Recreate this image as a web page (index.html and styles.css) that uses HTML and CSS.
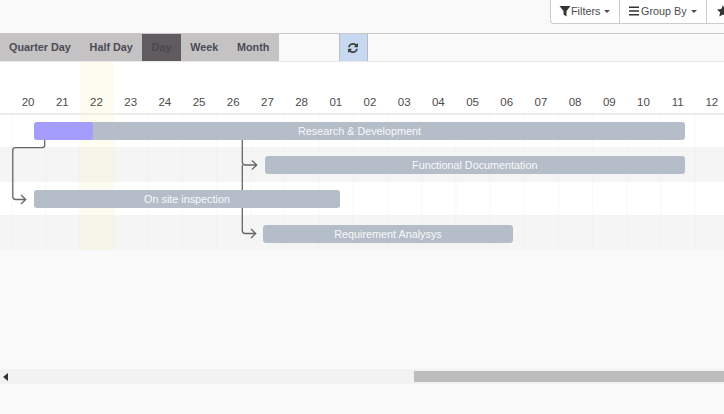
FILE: index.html
```html
<!DOCTYPE html>
<html lang="en">
<head>
<meta charset="utf-8">
<title>Gantt</title>
<link rel="stylesheet" href="styles.css">
</head>
<body>
<div class="panel">
  <div class="btn-group">
    <button class="ctl first"><svg class="ico" viewBox="0 0 12 12"><path d="M0.500 1H11.500L7.500 6V11.500L4.500 9.500V6Z"/></svg>Filters<span class="caret"></span></button>
    <button class="ctl second"><svg class="ico" viewBox="0 0 12 12"><path d="M0 1.500H10V3.100H0ZM0 5.200H10V6.800H0ZM0 8.900H10V10.500H0Z"/></svg>Group By<span class="caret"></span></button>
    <button class="ctl third" aria-label="Favorites"><svg class="ico" viewBox="0 0 12 12"><path d="M6 0.300L7.800 4.100L11.900 4.600L8.900 7.500L9.700 11.600L6 9.600L2.300 11.600L3.100 7.500L0.100 4.600L4.200 4.100Z"/></svg></button>
  </div>
</div>
<div class="toolbar">
  <button class="scale scale-first">Quarter Day</button>
  <button class="scale">Half Day</button>
  <button class="scale active">Day</button>
  <button class="scale">Week</button>
  <button class="scale">Month</button>
  <button class="refresh"><svg viewBox="0 0 1536 1536"><path d="M1511 928q0 5-1 7-64 268-268 434.500t-478 166.500q-146 0-282.500-55t-243.500-155l-129 129q-19 19-45 19t-45-19-19-45v-448q0-26 19-45t45-19h448q26 0 45 19t19 45-19 45l-137 137q71 66 161 102t187 36q134 0 250-65t186-179q11-17 53-117 8-23 30-23h192q13 0 22.500 9.500t9.500 22.500zm25-800v448q0 26-19 45t-45 19h-448q-26 0-45-19t-19-45 19-45l138-138q-148-137-349-137-134 0-250 65t-186 179q-11 17-53 117-8 23-30 23h-199q-13 0-22.500-9.500t-9.500-22.500v-7q65-268 270-434.500t480-166.500q146 0 284 55.500t245 154.500l130-129q19-19 45-19t45 19 19 45z"/></svg></button>
</div>
<div class="chart">
  <div class="today"></div>
  <div class="dates">
    <span>20</span><span>21</span><span>22</span><span>23</span><span>24</span><span>25</span><span>26</span><span>27</span><span>28</span><span>01</span><span>02</span><span>03</span><span>04</span><span>05</span><span>06</span><span>07</span><span>08</span><span>09</span><span>10</span><span>11</span><span>12</span>
  </div>
  <div class="row row-top">
    <div class="bar bar-research"><div class="progress"></div><span class="label">Research &amp; Development</span></div>
  </div>
  <div class="row alt">
    <div class="bar bar-doc"><span class="label">Functional Documentation</span></div>
  </div>
  <div class="row">
    <div class="bar bar-site"><span class="label">On site inspection</span></div>
  </div>
  <div class="row alt row-last">
    <div class="bar bar-req"><span class="label">Requirement Analysys</span></div>
  </div>
  <svg class="arrows" viewBox="0 0 724 250" width="724" height="250">
    <path d="M44.700 140V145Q44.700 147.700 42 147.700H15.500Q12.800 147.700 12.800 150.500V196.500Q12.800 199.500 15.800 199.500H25.500M21 195L25.700 199.500L21 204"/>
    <path d="M242.300 140V162Q242.300 165 245.300 165H256.500M252 160.500L256.700 165L252 169.500"/>
    <path d="M242.300 165V230.500Q242.300 233.500 245.300 233.500H255.500M251 229L255.700 233.500L251 238"/>
  </svg>
</div>
<div class="scroller">
  <span class="scroll-left"></span>
  <div class="thumb"></div>
</div>
</body>
</html>
```
FILE: styles.css
```css
* {
  box-sizing: border-box;
}

html,
body {
  margin: 0;
  height: 100%;
}

body {
  background: #f9f9f9;
  font-family: "Liberation Sans", Arial, sans-serif;
  font-size: 10.800px;
  color: #4c4c4c;
  overflow: hidden;
  width: 724px;
  height: 414px;
}

button {
  font: inherit;
  margin: 0;
  cursor: pointer;
}

.panel {
  height: 34px;
  border-bottom: 1px solid #c8c8c8;
  padding-left: 550px;
  overflow: hidden;
}

.btn-group {
  display: flex;
  width: 300px;
  height: 24px;
}

.ctl {
  display: flex;
  align-items: center;
  flex: none;
  height: 24px;
  padding: 0 0 1px 9px;
  background: #fff;
  border: 1px solid #ccc;
  border-top: 0;
  border-left: 0;
  color: #4c4c4c;
  white-space: nowrap;
}

.ctl.first {
  border-left: 1px solid #ccc;
  border-bottom-left-radius: 4px;
  padding-left: 8px;
  width: 70px;
}

.ctl.second {
  width: 87px;
}

.ctl.third {
  width: 40px;
  padding-left: 10px;
  border-right: 0;
}

.ico {
  width: 12px;
  height: 12px;
  fill: #333;
  flex: none;
}

.caret {
  width: 0;
  height: 0;
  margin-left: 4px;
  border-top: 3.500px solid #4c4c4c;
  border-left: 3.500px solid transparent;
  border-right: 3.500px solid transparent;
}

.toolbar {
  display: flex;
  height: 28px;
  border-bottom: 1px solid #e8e8e8;
}

.scale {
  height: 27px;
  padding: 0 9.400px 1px;
  border: 0;
  background: #c4c2c3;
  color: #4b4b55;
  font-weight: bold;
}

.scale-first {
  padding-left: 9px;
}

.scale.active {
  background: #5f5b5e;
  color: #4c484c;
}

.refresh {
  display: flex;
  align-items: center;
  justify-content: center;
  flex: none;
  width: 29px;
  height: 27px;
  margin-left: 60px;
  padding: 0;
  background: #c6d9f0;
  border: 1px solid #bcbcbc;
  border-width: 0 1px;
}

.refresh svg {
  width: 10px;
  height: 10px;
  fill: #3f3f3f;
}

.chart {
  position: relative;
}

.today {
  position: absolute;
  left: 79.500px;
  top: 0;
  z-index: 1;
  width: 34px;
  height: 188px;
  background: rgba(245, 245, 200, 0.28);
}

.dates {
  display: grid;
  grid-template-columns: repeat(21, 34.200px);
  align-items: end;
  position: relative;
  width: 100%;
  height: 53px;
  padding: 0 0 4px 11px;
  background: #fff;
  border-bottom: 2px solid #ececec;
  font-size: 11.500px;
  line-height: 14px;
  text-align: center;
  overflow: hidden;
}

.dates span {
  position: relative;
  z-index: 2;
}

.row {
  display: flex;
  align-items: flex-start;
  height: 34px;
  padding-top: 8px;
  background-color: #fff;
  background-image: linear-gradient(90deg, #f8f8f8 1px, transparent 1px);
  background-size: 34.200px 100%;
  background-position: 11px 0;
  border-bottom: 1px solid #f4f4f4;
}

.row.alt {
  background-color: #f5f5f5;
  background-image: linear-gradient(90deg, #f0f0f0 1px, transparent 1px);
}

.row-top {
  height: 33px;
  padding-top: 7px;
}

.row-last {
  padding-top: 9px;
}

.bar {
  position: relative;
  z-index: 2;
  display: flex;
  align-items: center;
  justify-content: center;
  height: 18px;
  background: #b5bdc9;
  border-radius: 3px;
  color: #fff;
  white-space: nowrap;
  overflow: hidden;
}

.bar-research {
  margin-left: 34px;
  width: 651px;
}

.bar-doc {
  margin-left: 264.500px;
  width: 420.500px;
}

.bar-site {
  margin-left: 34px;
  width: 306px;
}

.bar-req {
  margin-left: 263px;
  width: 250px;
}

.progress {
  position: absolute;
  left: 0;
  top: 0;
  bottom: 0;
  width: 59px;
  background: #a59dfd;
  border-radius: 3px;
}

.label {
  position: relative;
  opacity: 0.92;
}

.arrows {
  position: absolute;
  left: 0;
  top: -62px;
  z-index: 1;
  fill: none;
  stroke: #666;
  stroke-width: 1.300px;
}

.scroller {
  display: flex;
  align-items: center;
  justify-content: space-between;
  height: 15px;
  margin-top: 119px;
  background: #f1f2f1;
}

.scroll-left {
  width: 0;
  height: 0;
  margin-left: 3px;
  border-top: 4px solid transparent;
  border-bottom: 4px solid transparent;
  border-right: 5px solid #333;
}

.thumb {
  width: 310px;
  height: 11px;
  background: #bdbdbd;
}
```
